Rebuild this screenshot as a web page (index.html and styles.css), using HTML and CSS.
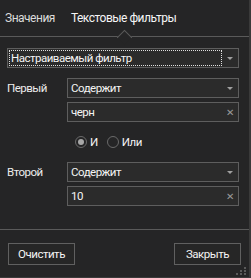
FILE: index.html
```html
<!DOCTYPE html>
<html lang="ru">
<head>
  <meta charset="UTF-8">
  <title>Фильтр</title>
  <link rel="stylesheet" href="styles.css">
</head>
<body>
  <div class="panel">
    <div class="tabs">
      <div class="tab">Значения</div>
      <div class="tab active">Текстовые фильтры</div>
    </div>

    <div class="content">
      <div class="combo main">
        <span class="focus">Настраиваемый фильтр</span>
        <span class="arrow"></span>
      </div>

      <div class="cond first">
        <span class="label">Первый</span>
        <div class="combo"><span>Содержит</span><span class="arrow"></span></div>
        <div class="combo input"><span>черн</span><span class="clear">&#x2715;</span></div>
      </div>

      <div class="radios">
        <label class="radio checked"><span class="dot"></span>И</label>
        <label class="radio"><span class="dot"></span>Или</label>
      </div>

      <div class="cond">
        <span class="label">Второй</span>
        <div class="combo"><span>Содержит</span><span class="arrow"></span></div>
        <div class="combo input"><span>10</span><span class="clear">&#x2715;</span></div>
      </div>
    </div>

    <div class="footer">
      <button>Очистить</button>
      <button>Закрыть</button>
    </div>

    <svg class="grip" width="11" height="9" viewBox="0 0 11 9">
      <rect x="8" y="0" width="2" height="2" fill="#5a5a5a"/>
      <rect x="4" y="3" width="2" height="2" fill="#5a5a5a"/>
      <rect x="8" y="3" width="2" height="2" fill="#5a5a5a"/>
      <rect x="0" y="6" width="2" height="2" fill="#5a5a5a"/>
      <rect x="4" y="6" width="2" height="2" fill="#5a5a5a"/>
      <rect x="8" y="6" width="2" height="2" fill="#5a5a5a"/>
    </svg>
  </div>
</body>
</html>
```

FILE: styles.css
```css
body {
  margin: 0;
  padding: 0;
  background-color: #1e1e1e;
  font-family: Roboto, "Liberation Sans", Arial, sans-serif;
  font-size: 11.5px;
  letter-spacing: -0.5px;
  color: #f4f4f4;
}

.panel {
  position: relative;
  width: 251px;
  height: 278px;
  box-sizing: border-box;
  background-color: #252526;
  border-right: 2px solid #3a3a3a;
  border-bottom: 1px solid #3a3a3a;
  display: flex;
  flex-direction: column;
}

.tabs {
  display: flex;
  height: 37px;
  border-bottom: 1px solid #5a5a5a;
  padding-left: 5px;
  gap: 16px;
  box-sizing: border-box;
}

.tab {
  position: relative;
  line-height: 36px;
  font-size: 12px;
  color: #dcdcdc;
}

.tab.active {
  color: #f6f6f6;
}

.tab.active::after {
  content: "";
  position: absolute;
  left: 50%;
  bottom: -7px;
  width: 10px;
  height: 10px;
  margin-left: -5px;
  background-color: #252526;
  border-top: 1px solid #5a5a5a;
  border-left: 1px solid #5a5a5a;
  transform: rotate(45deg);
}

.content {
  padding: 11px 10px 0 7px;
  flex: 1;
}

.combo {
  display: flex;
  align-items: center;
  justify-content: space-between;
  height: 20px;
  box-sizing: border-box;
  border: 1px solid #5e5e5e;
  background-color: #2b2b2b;
  padding: 0 5px 0 3px;
}

.combo.main {
  padding: 0 5px 0 1px;
}

.focus {
  flex: 1;
  height: 16px;
  line-height: 15px;
  box-sizing: border-box;
  border: 1px dotted #e0e0e0;
  padding-left: 1px;
  margin-right: 5px;
}

.arrow {
  width: 0;
  height: 0;
  border-left: 3px solid transparent;
  border-right: 3px solid transparent;
  border-top: 3px solid #a0a0a0;
}

.clear {
  color: #9a9a9a;
  font-size: 10px;
}

.cond {
  display: grid;
  grid-template-columns: 60px 1fr;
  row-gap: 4px;
  margin-top: 10px;
}

.cond .combo {
  grid-column: 2;
}

.cond .label {
  grid-row: 1;
  align-self: center;
  color: #ececec;
}

.radios {
  display: flex;
  align-items: center;
  gap: 9px;
  height: 14px;
  margin: 13px 0 13px 68px;
}

.radio {
  display: flex;
  align-items: center;
  gap: 3px;
}

.radio .dot {
  width: 12px;
  height: 12px;
  box-sizing: border-box;
  border: 1px solid #6a6a6a;
  border-radius: 50%;
  display: flex;
  align-items: center;
  justify-content: center;
}

.radio.checked .dot::before {
  content: "";
  width: 6px;
  height: 6px;
  border-radius: 50%;
  background-color: #a8a8a8;
}

.footer {
  display: flex;
  justify-content: space-between;
  border-top: 1px solid #5a5a5a;
  padding: 13px 8px 12px 8px;
}

.footer button {
  width: 67px;
  height: 22px;
  background-color: #262626;
  border: 1px solid #606060;
  color: #f4f4f4;
  font-family: inherit;
  font-size: 11.5px;
  letter-spacing: -0.5px;
  padding: 0;
}

.grip {
  position: absolute;
  right: 2px;
  bottom: 1px;
}
```
